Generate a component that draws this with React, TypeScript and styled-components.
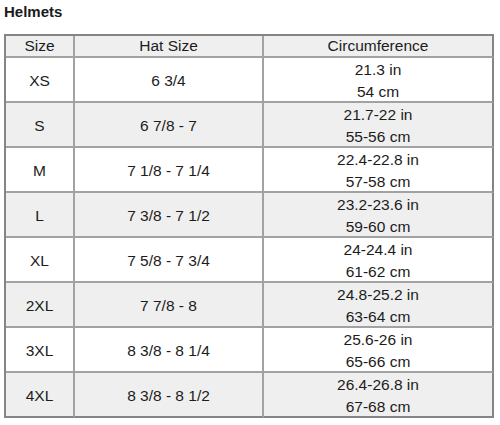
import React from "react";
import styled, { createGlobalStyle } from "styled-components";

const GlobalStyle = createGlobalStyle`
  html, body {
    margin: 0;
    padding: 0;
    background: #ffffff;
  }
  body {
    font-family: "Liberation Sans", Arial, sans-serif;
    color: #1c1c1c;
  }
`;

const Page = styled.div`
  width: 500px;
  height: 425px;
  overflow: hidden;
  background: #ffffff;
`;

const Title = styled.h1`
  margin: 0;
  padding: 3px 0 0 4px;
  height: 34px;
  box-sizing: border-box;
  font-size: 15px;
  line-height: 17px;
  font-weight: bold;
  color: #1a1a1a;
`;

const Grid = styled.div`
  margin-left: 4px;
  width: 490px;
  box-sizing: border-box;
  display: grid;
  grid-template-columns: 69px 189px 230px;
  border-top: 2px solid #858585;
  border-left: 2px solid #858585;
`;

const Cell = styled.div<{ $shaded: boolean; $header?: boolean; $lastCol?: boolean; $lastRow?: boolean }>`
  box-sizing: border-box;
  height: ${(p) => (p.$header ? "22px" : "45px")};
  display: flex;
  flex-direction: column;
  align-items: center;
  justify-content: center;
  text-align: center;
  font-size: 15.5px;
  line-height: ${(p) => (p.$header ? "20px" : "22px")};
  background: ${(p) => (p.$shaded ? "#efefef" : "#ffffff")};
  border-right: 2px solid ${(p) => (p.$lastCol ? "#858585" : "#a2a2a2")};
  border-bottom: 2px solid ${(p) => (p.$lastRow ? "#858585" : "#a2a2a2")};
  padding-top: ${(p) => (p.$header ? "0" : "2px")};
`;

const Line = styled.span`
  display: block;
  white-space: nowrap;
`;

const rows: [string, string, string, string][] = [
  ["XS", "6 3/4", "21.3 in", "54 cm"],
  ["S", "6 7/8 - 7", "21.7-22 in", "55-56 cm"],
  ["M", "7 1/8 - 7 1/4", "22.4-22.8 in", "57-58 cm"],
  ["L", "7 3/8 - 7 1/2", "23.2-23.6 in", "59-60 cm"],
  ["XL", "7 5/8 - 7 3/4", "24-24.4 in", "61-62 cm"],
  ["2XL", "7 7/8 - 8", "24.8-25.2 in", "63-64 cm"],
  ["3XL", "8 3/8 - 8 1/4", "25.6-26 in", "65-66 cm"],
  ["4XL", "8 3/8 - 8 1/2", "26.4-26.8 in", "67-68 cm"],
];

export default function App() {
  return (
    <Page>
      <GlobalStyle />
      <Title>Helmets</Title>
      <Grid>
        <Cell $shaded $header>Size</Cell>
        <Cell $shaded $header>Hat Size</Cell>
        <Cell $shaded $header $lastCol>Circumference</Cell>
        {rows.map((r, i) => {
          const shaded = i % 2 === 1;
          const last = i === rows.length - 1;
          return (
            <React.Fragment key={r[0]}>
              <Cell $shaded={shaded} $lastRow={last}>{r[0]}</Cell>
              <Cell $shaded={shaded} $lastRow={last}>{r[1]}</Cell>
              <Cell $shaded={shaded} $lastRow={last} $lastCol>
                <Line>{r[2]}</Line>
                <Line>{r[3]}</Line>
              </Cell>
            </React.Fragment>
          );
        })}
      </Grid>
    </Page>
  );
}
